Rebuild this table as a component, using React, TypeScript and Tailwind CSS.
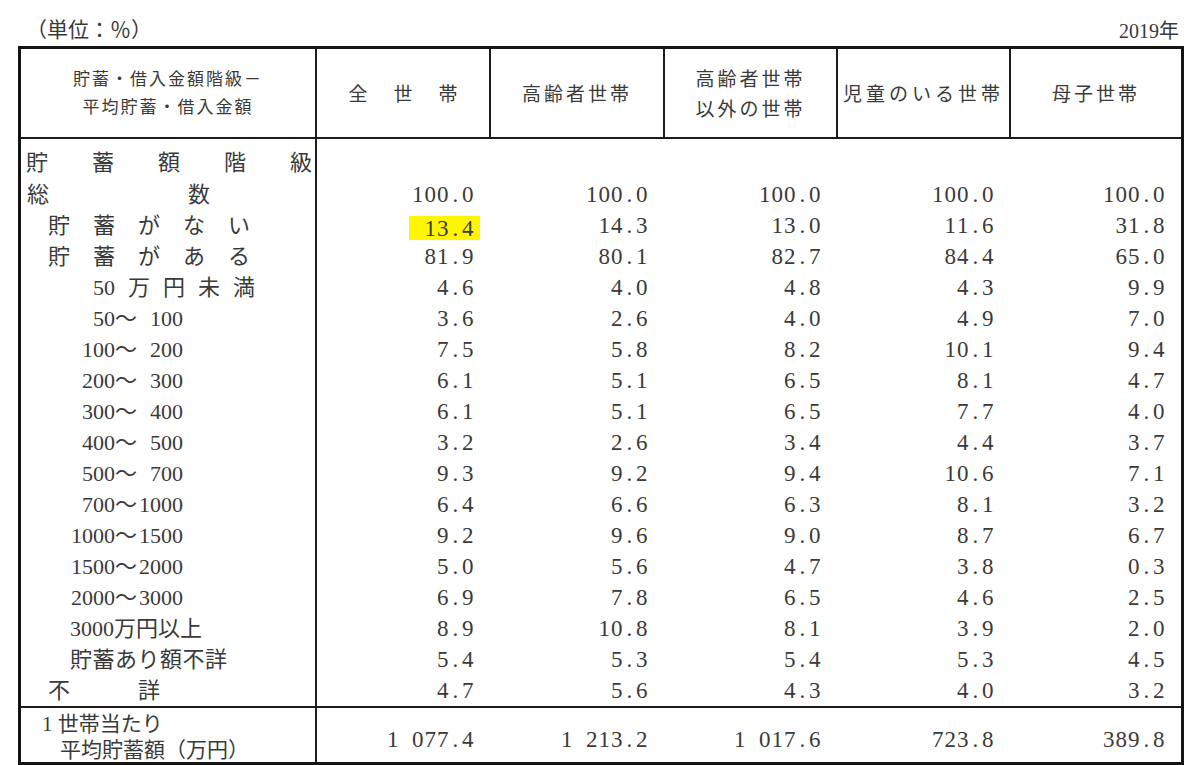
import type { ReactNode } from 'react';

const GRID = 'grid grid-cols-[296px_174px_174px_173px_173px_1fr]';

const ser = "font-['Liberation_Serif','Noto_Sans_CJK_JP',serif]";
const goth = "font-['Noto_Sans_CJK_JP','Noto_Sans',sans-serif]";

function Num({ s, mark }: { s: string; mark?: boolean }) {
  return (
    <span className={mark ? 'inline-flex items-center bg-[#fff500] pl-[15px] pr-[6px] -mr-[6px] h-[24px] mt-[5px]' : 'inline-flex'}>
      {s.split('').map((c, i) => (
        <span key={i} className="w-[12.5px] text-center">{c === ' ' ? '\u00a0' : c}</span>
      ))}
    </span>
  );
}

function Range({ lo, hi }: { lo: string; hi: string }) {
  return (
    <div className="w-[162px] text-right whitespace-nowrap">
      <span>{lo}～</span>
      <span className="inline-block w-[46px] text-right">{hi}</span>
    </div>
  );
}

const rows: { label: ReactNode; v: string[] }[] = [
  { label: <div className="pl-[6px] flex"><span>総</span><span className="ml-[139px]">数</span></div>, v: ['100.0', '100.0', '100.0', '100.0', '100.0'] },
  { label: <div className="pl-[27px] flex gap-[23px]">{'貯蓄がない'.split('').map((c, i) => <span key={i}>{c}</span>)}</div>, v: ['13.4', '14.3', '13.0', '11.6', '31.8'] },
  { label: <div className="pl-[27px] flex gap-[23px]">{'貯蓄がある'.split('').map((c, i) => <span key={i}>{c}</span>)}</div>, v: ['81.9', '80.1', '82.7', '84.4', '65.0'] },
  { label: <div className="pl-[72px] flex gap-[13px]">{['50', '万', '円', '未', '満'].map((c, i) => <span key={i}>{c}</span>)}</div>, v: ['4.6', '4.0', '4.8', '4.3', '9.9'] },
  { label: <Range lo="50" hi="100" />, v: ['3.6', '2.6', '4.0', '4.9', '7.0'] },
  { label: <Range lo="100" hi="200" />, v: ['7.5', '5.8', '8.2', '10.1', '9.4'] },
  { label: <Range lo="200" hi="300" />, v: ['6.1', '5.1', '6.5', '8.1', '4.7'] },
  { label: <Range lo="300" hi="400" />, v: ['6.1', '5.1', '6.5', '7.7', '4.0'] },
  { label: <Range lo="400" hi="500" />, v: ['3.2', '2.6', '3.4', '4.4', '3.7'] },
  { label: <Range lo="500" hi="700" />, v: ['9.3', '9.2', '9.4', '10.6', '7.1'] },
  { label: <Range lo="700" hi="1000" />, v: ['6.4', '6.6', '6.3', '8.1', '3.2'] },
  { label: <Range lo="1000" hi="1500" />, v: ['9.2', '9.6', '9.0', '8.7', '6.7'] },
  { label: <Range lo="1500" hi="2000" />, v: ['5.0', '5.6', '4.7', '3.8', '0.3'] },
  { label: <Range lo="2000" hi="3000" />, v: ['6.9', '7.8', '6.5', '4.6', '2.5'] },
  { label: <div className="pl-[49px]">3000万円以上</div>, v: ['8.9', '10.8', '8.1', '3.9', '2.0'] },
  { label: <div className="pl-[49px] tracking-[0.5px]">貯蓄あり額不詳</div>, v: ['5.4', '5.3', '5.4', '5.3', '4.5'] },
  { label: <div className="pl-[27px] flex"><span>不</span><span className="ml-[68px]">詳</span></div>, v: ['4.7', '5.6', '4.3', '4.0', '3.2'] },
];

const avg = ['1 077.4', '1 213.2', '1 017.6', '723.8', '389.8'];

function HeadCell({ children, last }: { children: ReactNode; last?: boolean }) {
  return (
    <div className={`flex flex-col items-center justify-center leading-[30px] text-[19px] tracking-[3px] ${last ? '' : 'border-r-2 border-[#1c1c1c]'}`}>
      {children}
    </div>
  );
}

export default function App() {
  return (
    <div className={`w-[1200px] h-[765px] bg-white overflow-hidden text-[#3a3a3a] ${goth}`}>
      <div className={`h-[46px] flex items-end justify-between pl-[26px] pr-[21px] pb-[5px] leading-none ${ser}`}>
        <span className="text-[21px]">（単位：％）</span>
        <span className="text-[20px]">2019年</span>
      </div>
      <div className="ml-[18px] w-[1166px] border-[3px] border-[#141414]">
        <div className={`${GRID} h-[90px] border-b-2 border-[#1c1c1c]`}>
          <div className="flex flex-col items-center justify-center border-r-2 border-[#1c1c1c] text-[17px] tracking-[2px] leading-[28px] pb-[2px]">
            <span>貯蓄・借入金額階級－</span>
            <span>平均貯蓄・借入金額</span>
          </div>
          <HeadCell><span className="tracking-[26px] pl-[26px]">全世帯</span></HeadCell>
          <HeadCell>高齢者世帯</HeadCell>
          <HeadCell><span>高齢者世帯</span><span>以外の世帯</span></HeadCell>
          <HeadCell><span className="tracking-[4px]">児童のいる世帯</span></HeadCell>
          <HeadCell last>母子世帯</HeadCell>
        </div>

        <div className={`text-[22px] leading-none ${ser}`}>
          <div className={`${GRID} h-[40px]`}>
            <div className={`border-r-2 border-[#1c1c1c] flex items-center justify-between pl-[5px] pr-[3px] pt-[2px] ${goth}`}>
              {'貯蓄額階級'.split('').map((c, i) => <span key={i}>{c}</span>)}
            </div>
            <div className="col-span-5" />
          </div>
          {rows.map((r, i) => (
            <div key={i} className={`${GRID} h-[31px]`}>
              <div className="border-r-2 border-[#1c1c1c] flex items-center">{r.label}</div>
              {r.v.map((v, j) => (
                <div key={j} className={`flex items-center justify-end text-[23px] ${j === 4 ? 'pr-[16px]' : 'pr-[17px]'}`}>
                  <Num s={v} mark={i === 1 && j === 0} />
                </div>
              ))}
            </div>
          ))}
        </div>

        <div className={`${GRID} h-[56px] border-t-2 border-[#1c1c1c] leading-none ${ser}`}>
          <div className="border-r-2 border-[#1c1c1c] flex flex-col justify-center gap-[5px] text-[21px] pt-[4px]">
            <span className="pl-[21px]">1 世帯当たり</span>
            <span className="pl-[39px]">平均貯蓄額（万円）</span>
          </div>
          {avg.map((v, j) => (
            <div key={j} className={`flex items-center justify-end text-[23px] pt-[8px] ${j === 4 ? 'pr-[16px]' : 'pr-[17px]'}`}>
              <Num s={v} />
            </div>
          ))}
        </div>
      </div>
    </div>
  );
}
